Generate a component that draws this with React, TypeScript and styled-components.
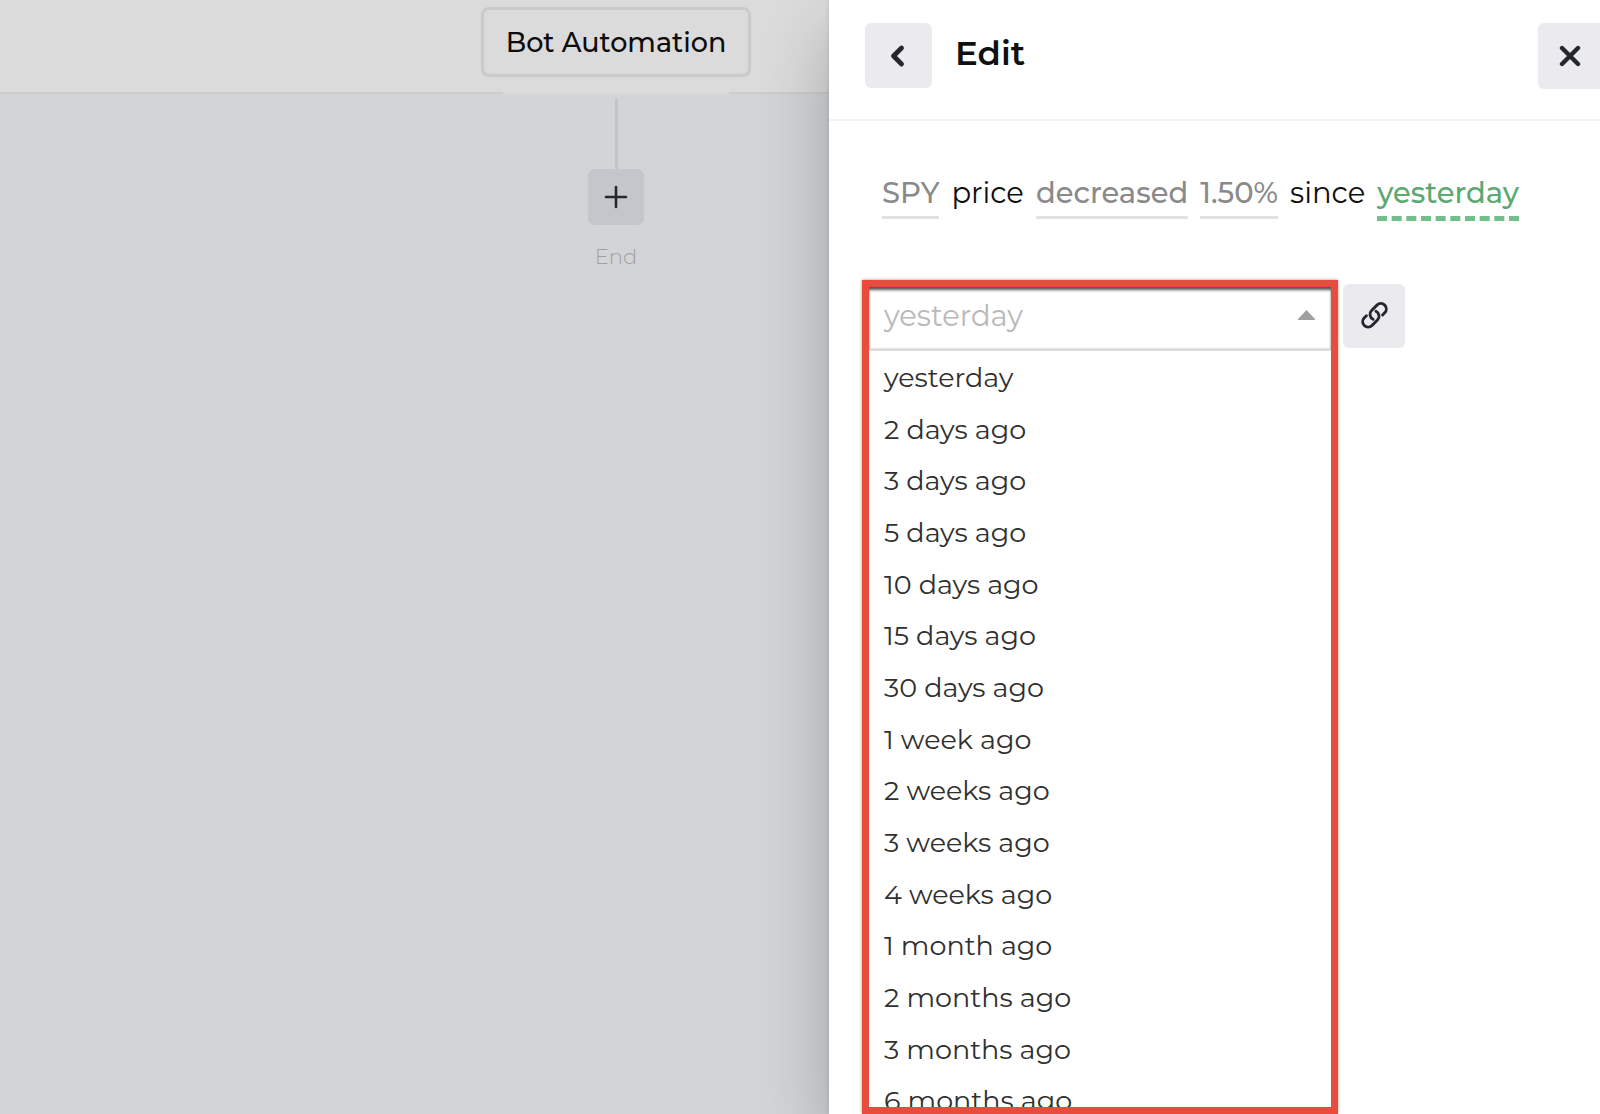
import React, { useState } from "react";
import styled, { createGlobalStyle } from "styled-components";

const GlobalStyle = createGlobalStyle`
  *, *::before, *::after { box-sizing: border-box; }
  body { margin: 0; font-family: Montserrat, Inter, "Open Sans", sans-serif; color: #2b2b2b; background: #fff; }
  button, input { font: inherit; color: inherit; border: 0; margin: 0; padding: 0; }
  button { cursor: pointer; }
`;

const Page = styled.div`
  display: flex;
  height: 100vh;
  overflow: hidden;
`;

const Workspace = styled.main`
  flex: 1;
  min-width: 0;
  display: flex;
  flex-direction: column;
  overflow: hidden;
  background: #d2d4d6;
`;

const Toolbar = styled.header`
  height: 94px;
  flex: none;
  padding: 7px 0 0 481px;
  background: #dbdbdb;
  border-bottom: 2px solid #cccccd;
`;

const AutomationButton = styled.button`
  width: 270px;
  height: 70px;
  border: 3px solid #cacaca;
  border-radius: 8px;
  background: transparent;
  color: #0c0c0c;
  font-size: 27px;
  font-weight: 500;
  white-space: nowrap;
`;

const Flow = styled.section`
  width: 270px;
  margin: -2px 0 0 481px;
  display: flex;
  flex-direction: column;
  align-items: center;
`;

const FlowTab = styled.div`
  width: 226px;
  height: 3px;
  background: #d9d8da;
`;

const Connector = styled.div`
  width: 3px;
  height: 70px;
  margin-top: 4px;
  background: #c6c3c7;
`;

const AddButton = styled.button`
  display: grid;
  place-items: center;
  width: 56px;
  height: 56px;
  border-radius: 7px;
  background: #c5c6cb;
  color: #24282c;
`;

const FlowEnd = styled.span`
  margin-top: 20px;
  font-size: 21px;
  line-height: 24px;
  font-weight: 300;
  color: #a0a1a3;
`;

const Drawer = styled.aside`
  position: relative;
  flex: none;
  width: 771px;
  display: flex;
  flex-direction: column;
  background: #fff;
  box-shadow: 0 32px 64px rgba(0, 0, 0, 0.24), 0 0 4px rgba(0, 0, 0, 0.12);
`;

const DrawerHeader = styled.header`
  flex: none;
  display: flex;
  align-items: flex-start;
  height: 121px;
  padding: 23px 0 0 36px;
  border-bottom: 2px solid #f3f3f3;
`;

const IconButton = styled.button<{ $width: number; $height: number; $edge?: boolean }>`
  flex: none;
  display: grid;
  place-items: center;
  width: ${(p) => p.$width}px;
  height: ${(p) => p.$height}px;
  border-radius: ${(p) => (p.$edge ? "6px 0 0 6px" : "6px")};
  background: #ebeaef;
  color: #24272b;
`;

const Title = styled.h1`
  flex: 1;
  margin: 0 0 0 23px;
  font-size: 34px;
  line-height: 60px;
  font-weight: 600;
  color: #101010;
`;

const Sentence = styled.p`
  flex: none;
  display: flex;
  gap: 12px;
  margin: 0;
  padding: 52px 0 59px 53px;
  font-size: 29px;
  line-height: 40px;
  color: #0e0e0e;
  white-space: nowrap;
`;

const Word = styled.span`
  height: 48px;
`;

const Token = styled.button<{ $active?: boolean }>`
  height: ${(p) => (p.$active ? 48 : 46)}px;
  padding-bottom: 3px;
  background: none;
  font-weight: 500;
  line-height: 40px;
  color: ${(p) => (p.$active ? "#5ba971" : "#8a8a8a")};
  border-bottom: ${(p) => (p.$active ? "5px dashed #73bf8b" : "3px solid #e2e2e2")};
`;

const Editor = styled.div`
  flex: 1;
  min-height: 0;
  display: flex;
  align-items: flex-start;
  gap: 5px;
  padding-left: 33px;
`;

const Picker = styled.div`
  width: 476px;
  height: 100%;
  display: flex;
  flex-direction: column;
  overflow: hidden;
  border: 7px solid #e74c3c;
  box-shadow: 0 0 3px rgba(0, 0, 0, 0.4);
`;

const Field = styled.label`
  flex: none;
  display: flex;
  align-items: center;
  height: 64px;
  padding: 0 16px 6px 15px;
  border-bottom: 2px solid #dcdcdc;
  box-shadow: inset 0 4px 3px -1px #555, inset 0 0 2px rgba(0, 0, 0, 0.4);
`;

const FieldInput = styled.input`
  flex: 1;
  min-width: 0;
  height: 40px;
  outline: 0;
  background: none;
  font-size: 29px;
  &::placeholder { color: #b9b9b9; opacity: 1; }
`;

const Options = styled.ul`
  flex: none;
  display: flex;
  flex-direction: column;
  height: 776px;
  margin: 0;
  padding: 1px 0 0;
  list-style: none;
`;

const Option = styled.li`
  flex: 1;
  display: flex;
  align-items: center;
  padding-left: 15px;
  font-size: 27px;
  line-height: 36px;
  color: #303030;
  cursor: pointer;
`;

const LinkSlot = styled.div`
  padding-top: 4px;
`;

const choices = [
  "yesterday", "2 days ago", "3 days ago", "5 days ago", "10 days ago",
  "15 days ago", "30 days ago", "1 week ago", "2 weeks ago", "3 weeks ago",
  "4 weeks ago", "1 month ago", "2 months ago", "3 months ago", "6 months ago",
];

export default function App() {
  const [selected, setSelected] = useState("yesterday");
  return (
    <>
      <GlobalStyle />
      <Page>
        <Workspace>
          <Toolbar>
            <AutomationButton type="button">Bot Automation</AutomationButton>
          </Toolbar>
          <Flow>
            <FlowTab />
            <Connector />
            <AddButton type="button" aria-label="Add step">
              <svg width="24" height="24" viewBox="0 0 24 24" fill="none" stroke="currentColor" strokeWidth="2.6" strokeLinecap="round">
                <path d="M12 2v20M2 12h20" />
              </svg>
            </AddButton>
            <FlowEnd>End</FlowEnd>
          </Flow>
        </Workspace>
        <Drawer>
          <DrawerHeader>
            <IconButton type="button" $width={67} $height={65} aria-label="Back">
              <svg width="24" height="24" viewBox="0 0 24 24" fill="none" stroke="currentColor" strokeWidth="4.8" strokeLinecap="round" strokeLinejoin="round">
                <path d="M14.500 4L6.500 12l8 8" />
              </svg>
            </IconButton>
            <Title>Edit</Title>
            <IconButton type="button" $width={62} $height={66} $edge aria-label="Close">
              <svg width="24" height="24" viewBox="0 0 24 24" fill="none" stroke="currentColor" strokeWidth="4.4" strokeLinecap="round">
                <path d="M5 4L21 20M21 4L5 20" />
              </svg>
            </IconButton>
          </DrawerHeader>
          <Sentence>
            <Token type="button">SPY</Token>
            <Word>price</Word>
            <Token type="button">decreased</Token>
            <Token type="button">1.50%</Token>
            <Word>since</Word>
            <Token type="button" $active>{selected}</Token>
          </Sentence>
          <Editor>
            <Picker>
              <Field>
                <FieldInput role="combobox" aria-label="Since" aria-expanded="true" aria-controls="since-options" placeholder={selected} />
                <svg width="17" height="10" viewBox="0 0 17 10" fill="#a0a0a0">
                  <path d="M8.500 0L17 9v1H0V9z" />
                </svg>
              </Field>
              <Options id="since-options" role="listbox" aria-label="Since">
                {choices.map((choice) => (
                  <Option key={choice} role="option" aria-selected={choice === selected} onClick={() => setSelected(choice)}>
                    {choice}
                  </Option>
                ))}
              </Options>
            </Picker>
            <LinkSlot>
              <IconButton type="button" $width={62} $height={64} aria-label="Link value">
                <svg width="29" height="29" viewBox="0 0 24 24" fill="none" stroke="currentColor" strokeWidth="2.4" strokeLinecap="round" strokeLinejoin="round">
                  <path d="M13.190 7.690a4.500 4.500 0 0 1 1.242 7.244l-4.500 4.500a4.500 4.500 0 0 1-6.364-6.364l1.757-1.757m13.350-.622 1.757-1.757a4.500 4.500 0 0 0-6.364-6.364l-4.500 4.500a4.500 4.500 0 0 0 1.242 7.244" />
                </svg>
              </IconButton>
            </LinkSlot>
          </Editor>
        </Drawer>
      </Page>
    </>
  );
}
